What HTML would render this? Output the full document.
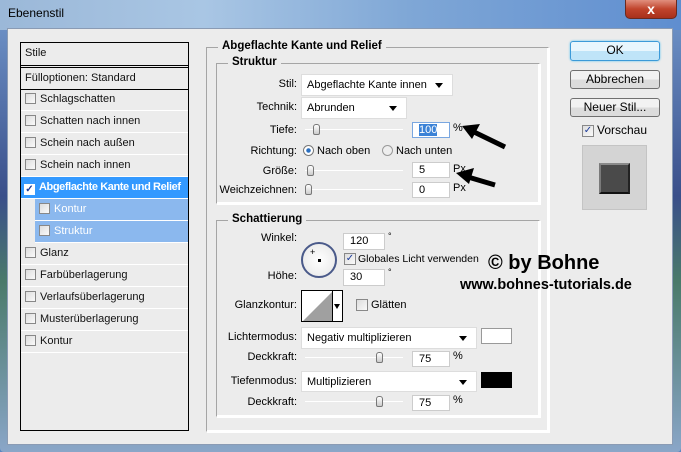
<!DOCTYPE html>
<html><head><meta charset="utf-8"><style>
*{margin:0;padding:0;box-sizing:border-box}
body{width:681px;height:452px;overflow:hidden;font-family:"Liberation Sans",Tahoma,sans-serif;font-size:11px;color:#000;position:relative;background:#5a86c0;white-space:nowrap}
.a{position:absolute}
#title{left:0;top:0;width:681px;height:30px;background:linear-gradient(90deg,#9bb8d8 0%,#a9c6e4 30%,#7fa7d6 60%,#5f8ed0 100%)}
#frame{left:0;top:26px;width:681px;height:426px;background:linear-gradient(180deg,#6b8fc4,#3a4f8a 40%,#4a7a6a 60%,#8aa6c8);border-radius:0 0 4px 4px}
#dlg{left:7px;top:28px;width:666px;height:417px;background:#ececec;border:1px solid #8a9bb4}
.list{left:20px;top:42px;width:169px;height:389px;border:1px solid #000;background:#ececec}
.row{position:absolute;left:0;width:167px;height:22px;border-bottom:1px solid #fff;line-height:21px;padding-left:4px;color:#111;overflow:hidden}
.cb{display:inline-block;width:11px;height:11px;border:1px solid #888;background:linear-gradient(135deg,#ddd,#fafafa);vertical-align:-2px;margin-right:4px}
.fs{border:1px solid #a5a5a5;border-right-color:#fff;border-bottom-color:#fff;box-shadow:inset -1px -1px 0 #fff,1px 1px 0 #fff}
.leg{background:#ececec;font-weight:bold;padding:0 4px;font-size:11.5px}
.lbl{text-align:right;width:120px}
.dd{background:#fff;border:1px solid #ddd;padding-left:5px;line-height:20px}
.arr{position:absolute;right:9px;top:8px;width:0;height:0;border-left:4px solid transparent;border-right:4px solid transparent;border-top:5px solid #000}
.in{background:#fff;border:1px solid #ccc;padding-left:6px;line-height:14px}
.sl{height:1px;background:#aaa;border-bottom:1px solid #fff}
.th{position:absolute;width:7px;height:11px;border:1px solid #777;border-radius:3px 3px 2px 2px;background:linear-gradient(#fff,#ccc);top:-5px}
.btn{left:570px;width:90px;height:19px;border:1px solid #707070;border-radius:3px;background:linear-gradient(#f2f2f2 50%,#dcdcdc 50%);text-align:center;line-height:17px;font-size:12px}
</style></head><body>
<div class="a" id="frame"></div>
<div class="a" id="title"></div>
<div class="a" style="left:8px;top:6px;font-size:12px">Ebenenstil</div>
<div class="a" style="left:625px;top:-3px;width:52px;height:22px;border-radius:0 0 5px 5px;background:linear-gradient(#e8a090,#c0442c 55%,#a8301c);border:1px solid #6a2a20;color:#fff;text-align:center;font-weight:bold;font-size:14px;line-height:22px">x</div>
<div class="a" id="dlg"></div>

<div class="a list">
<div class="row" style="top:0;height:23px;border-bottom:1px solid #000">Stile</div>
<div class="row" style="top:24px;height:23px;border-top:1px solid #000;border-bottom:1px solid #000">Fülloptionen: Standard</div>
<div class="row" style="top:46px"><span class="cb"></span>Schlagschatten</div>
<div class="row" style="top:68px"><span class="cb"></span>Schatten nach innen</div>
<div class="row" style="top:90px"><span class="cb"></span>Schein nach außen</div>
<div class="row" style="top:112px"><span class="cb"></span>Schein nach innen</div>
<div class="row" style="top:134px;background:#3399ff;color:#fff;font-weight:bold;letter-spacing:-0.4px;padding-left:3px"><span class="cb" style="background:#fff;border-color:#fff;color:#1a3a9a;font-size:10px;line-height:9px;text-align:center;letter-spacing:0">✓</span>Abgeflachte Kante und Relief</div>
<div class="row" style="top:156px;left:14px;width:153px;background:#8bb8ee;color:#fff"><span class="cb"></span>Kontur</div>
<div class="row" style="top:178px;left:14px;width:153px;background:#8bb8ee;color:#fff"><span class="cb"></span>Struktur</div>
<div class="row" style="top:200px"><span class="cb"></span>Glanz</div>
<div class="row" style="top:222px"><span class="cb"></span>Farbüberlagerung</div>
<div class="row" style="top:244px"><span class="cb"></span>Verlaufsüberlagerung</div>
<div class="row" style="top:266px"><span class="cb"></span>Musterüberlagerung</div>
<div class="row" style="top:288px"><span class="cb"></span>Kontur</div>
</div>

<div class="a fs" style="left:206px;top:47px;width:343px;height:385px"></div>
<div class="a leg" style="left:218px;top:40px">Abgeflachte Kante und Relief</div>
<div class="a fs" style="left:216px;top:63px;width:324px;height:141px"></div>
<div class="a leg" style="left:228px;top:56px">Struktur</div>
<div class="a fs" style="left:216px;top:220px;width:324px;height:197px"></div>
<div class="a leg" style="left:228px;top:213px">Schattierung</div>

<div class="a lbl" style="left:177px;top:78px">Stil:</div>
<div class="a dd" style="left:301px;top:74px;width:152px;height:22px">Abgeflachte Kante innen<span class="arr"></span></div>
<div class="a lbl" style="left:177px;top:101px">Technik:</div>
<div class="a dd" style="left:301px;top:97px;width:106px;height:22px">Abrunden<span class="arr"></span></div>
<div class="a lbl" style="left:177px;top:124px">Tiefe:</div>
<div class="a sl" style="left:305px;top:129px;width:98px"><span class="th" style="left:8px"></span></div>
<div class="a in" style="left:412px;top:122px;width:38px;height:16px;border-color:#7aa7e0"><span style="background:#3b82d6;color:#fff">100</span></div>
<div class="a" style="left:453px;top:122px">%</div>
<div class="a lbl" style="left:177px;top:145px">Richtung:</div>
<div class="a" style="left:303px;top:145px;width:11px;height:11px;border-radius:50%;border:1px solid #777;background:radial-gradient(#2a6fc0 30%,#fff 40%)"></div>
<div class="a" style="left:317px;top:145px">Nach oben</div>
<div class="a" style="left:382px;top:145px;width:11px;height:11px;border-radius:50%;border:1px solid #999;background:#eee"></div>
<div class="a" style="left:396px;top:145px">Nach unten</div>
<div class="a lbl" style="left:177px;top:165px">Größe:</div>
<div class="a sl" style="left:305px;top:170px;width:98px"><span class="th" style="left:2px"></span></div>
<div class="a in" style="left:412px;top:162px;width:38px;height:16px">5</div>
<div class="a" style="left:453px;top:163px">Px</div>
<div class="a lbl" style="left:177px;top:184px">Weichzeichnen:</div>
<div class="a sl" style="left:305px;top:189px;width:98px"><span class="th" style="left:0"></span></div>
<div class="a in" style="left:412px;top:182px;width:38px;height:16px">0</div>
<div class="a" style="left:453px;top:182px">Px</div>

<svg class="a" style="left:450px;top:115px" width="70" height="80"><path d="M55 32 L22 16" stroke="#000" stroke-width="5"/><path d="M12 11 L30 9 L22 24 Z" fill="#000"/><path d="M45 70 L18 62" stroke="#000" stroke-width="5"/><path d="M6 58 L24 53 L19 69 Z" fill="#000"/></svg>

<div class="a lbl" style="left:177px;top:232px">Winkel:</div>
<div class="a" style="left:301px;top:242px;width:36px;height:36px;border-radius:50%;border:2px solid #4a5a8a;background:radial-gradient(#fff,#e6e6e6)"></div>
<div class="a" style="left:310px;top:247px;font-size:9px">+</div>
<div class="a" style="left:318px;top:259px;width:3px;height:3px;background:#000"></div>
<div class="a in" style="left:343px;top:233px;width:42px;height:17px">120</div>
<div class="a" style="left:388px;top:231px;font-size:9px">°</div>
<div class="a cb" style="left:344px;top:253px;width:12px;height:12px;font-size:10px;line-height:10px;color:#1a3a9a;text-align:center">✓</div>
<div class="a" style="left:358px;top:253px;font-size:10.5px">Globales Licht verwenden</div>
<div class="a lbl" style="left:177px;top:270px">Höhe:</div>
<div class="a in" style="left:343px;top:269px;width:42px;height:17px">30</div>
<div class="a" style="left:388px;top:267px;font-size:9px">°</div>
<div class="a lbl" style="left:177px;top:299px">Glanzkontur:</div>
<div class="a" style="left:301px;top:290px;width:42px;height:32px;border:1px solid #000;background:#fff"><svg width="30" height="30" style="position:absolute;left:1px;top:0"><path d="M0 30 L30 0 L30 30 Z" fill="#a0a0a0"/></svg><div style="position:absolute;left:30px;top:0;width:1px;height:30px;background:#000"></div><span class="arr" style="right:2px;top:13px;border-width:5px 3px 0 3px"></span></div>
<div class="a cb" style="left:356px;top:299px;width:12px;height:12px"></div>
<div class="a" style="left:371px;top:299px">Glätten</div>
<div class="a lbl" style="left:177px;top:331px">Lichtermodus:</div>
<div class="a dd" style="left:301px;top:327px;width:176px;height:22px">Negativ multiplizieren<span class="arr"></span></div>
<div class="a" style="left:481px;top:328px;width:31px;height:16px;background:#fff;border:1px solid #999"></div>
<div class="a lbl" style="left:177px;top:351px">Deckkraft:</div>
<div class="a sl" style="left:305px;top:357px;width:98px"><span class="th" style="left:71px"></span></div>
<div class="a in" style="left:412px;top:351px;width:38px;height:16px">75</div>
<div class="a" style="left:453px;top:350px">%</div>
<div class="a lbl" style="left:177px;top:375px">Tiefenmodus:</div>
<div class="a dd" style="left:301px;top:371px;width:176px;height:21px">Multiplizieren<span class="arr"></span></div>
<div class="a" style="left:481px;top:372px;width:31px;height:16px;background:#000"></div>
<div class="a lbl" style="left:177px;top:396px">Deckkraft:</div>
<div class="a sl" style="left:305px;top:401px;width:98px"><span class="th" style="left:71px"></span></div>
<div class="a in" style="left:412px;top:395px;width:38px;height:16px">75</div>
<div class="a" style="left:453px;top:394px">%</div>

<div class="a" style="left:488px;top:252px;font-size:20px;font-weight:bold">© by Bohne</div>
<div class="a" style="left:460px;top:277px;font-size:14.5px;font-weight:bold">www.bohnes-tutorials.de</div>

<div class="a btn" style="top:41px;height:20px;border-color:#3c9ad8;background:linear-gradient(#e8f6fd 50%,#bfe4f8 50%);box-shadow:0 0 2px #5cc4f0">OK</div>
<div class="a btn" style="top:70px">Abbrechen</div>
<div class="a btn" style="top:98px">Neuer Stil...</div>
<div class="a cb" style="left:582px;top:125px;width:12px;height:12px;font-size:10px;line-height:10px;color:#1a3a9a;text-align:center">✓</div>
<div class="a" style="left:597px;top:123px;font-size:12px">Vorschau</div>
<div class="a" style="left:582px;top:145px;width:65px;height:65px;background:#d4d4d4;border:1px solid #c4c4c4"></div>
<div class="a" style="left:599px;top:163px;width:31px;height:31px;background:#4a4a4a;border:2px solid;border-color:#8a8a8a #222 #111 #7a7a7a"></div>
</body></html>
